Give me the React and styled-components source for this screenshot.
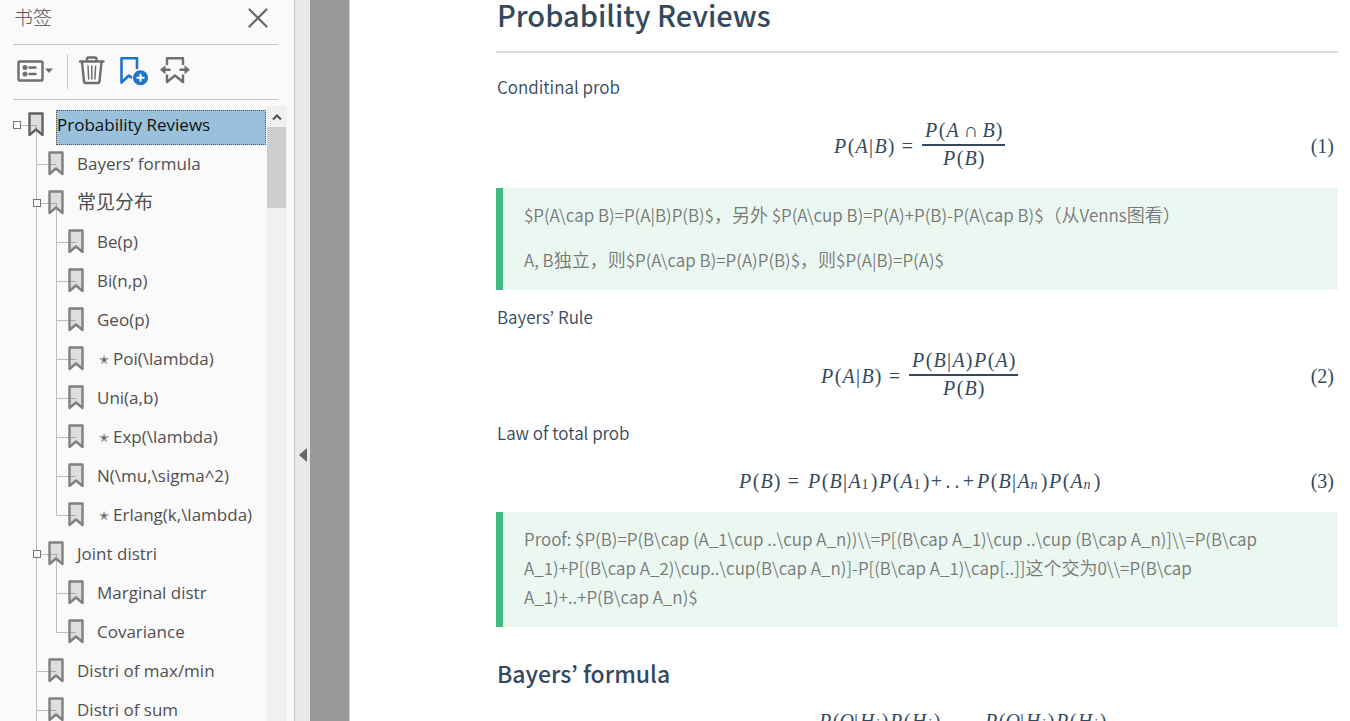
import React from "react";
import styled, { createGlobalStyle } from "styled-components";

const INK = "#34495e";
const LINE = "#bdbdbd";

const GlobalStyle = createGlobalStyle`
  * { box-sizing: border-box; }
  body { margin: 0; background: #fff; }
  button { padding: 0; border: 0; background: none; cursor: pointer; }
`;

const Shell = styled.div`
  display: flex;
  height: 100vh;
  overflow: hidden;
`;

/* ---------- Bookmark panel ---------- */

const Panel = styled.aside`
  display: flex;
  flex-direction: column;
  flex: 0 0 295px;
  background: #fafafa;
  border-right: 1px solid #c8c8c8;
  font-family: "Open Sans", "Noto Sans CJK SC", sans-serif;
  color: #505050;
`;

const PanelHeader = styled.header`
  display: flex;
  align-items: center;
  justify-content: space-between;
  height: 45px;
  margin: 0 16px 0 13px;
  padding: 0 10px 8px 1px;
  border-bottom: 1px solid #c8c8c8;
`;

const PanelTitle = styled.h2`
  margin: 0;
  font-size: 19px;
  font-weight: 300;
  line-height: 28px;
`;

const IconButton = styled.button`
  display: flex;
  flex: none;
`;

const Toolbar = styled.div`
  display: flex;
  align-items: center;
  height: 55px;
  margin: 0 16px 0 13px;
  padding: 0 0 2px 4px;
  border-bottom: 1px solid #c8c8c8;
`;

const ToolDivider = styled.span`
  width: 1px;
  height: 35px;
  margin: 0 11px 0 13px;
  background: #c8c8c8;
`;

const ToolGroup = styled.div`
  display: flex;
  gap: 11px;
`;

const TreeArea = styled.div`
  display: flex;
  flex: 1;
  min-height: 0;
  padding: 6px 7px 0 0;
`;

const Tree = styled.nav`
  flex: 1;
  min-width: 0;
  padding-right: 1px;
  overflow: hidden;
`;

const TreeList = styled.ul`
  margin: 0;
  padding: 0;
  list-style: none;

  & & { margin-left: 20px; }

  & & > li {
    background:
      linear-gradient(${LINE}, ${LINE}) 16px 0 / 1px 100% no-repeat,
      linear-gradient(${LINE}, ${LINE}) 16px 19px / 20px 1px no-repeat;
  }

  & & > li:last-child {
    background-size: 1px 20px, 20px 1px;
  }
`;

const TreeRow = styled.div`
  display: flex;
  align-items: flex-start;
  height: 39px;
  padding-left: 13px;
  background: ${(p) =>
    p.$open
      ? `linear-gradient(${LINE}, ${LINE}) 36px 19px / 1px 20px no-repeat,
         linear-gradient(${LINE}, ${LINE}) 20px 19px / 16px 1px no-repeat`
      : "none"};
`;

const ExpanderSlot = styled.span`
  flex: 0 0 15px;
  padding-top: 15px;
`;

const Expander = styled.button`
  display: block;
  width: 8px;
  height: 8px;
  && {
    border: 1px solid #777;
    background: #fafafa;
  }
`;

const RowIcon = styled.span`
  flex: 0 0 28px;
  height: 25px;
  margin-top: 6px;
  svg { display: block; }
`;

const RowLabel = styled.a`
  flex: 1;
  height: 35px;
  margin-top: 4px;
  border: 1px dotted ${(p) => (p.$selected ? "#7a4a2a" : "transparent")};
  background: ${(p) => (p.$selected ? "#9ac1db" : "transparent")};
  color: ${(p) => (p.$selected ? "#111" : "#505050")};
  font-size: 17px;
  line-height: 28px;
  text-decoration: none;
  white-space: nowrap;
`;

const Han = styled.span`
  font-size: ${(p) => p.$size}px;
  line-height: 1;
`;

const Star = styled.span`
  display: inline-block;
  width: 16px;
  padding-left: 2px;
  font-family: "DejaVu Sans", sans-serif;
  font-size: 12px;
  line-height: 1;
  vertical-align: 1px;
`;

const Scrollbar = styled.div`
  display: flex;
  flex-direction: column;
  flex: 0 0 20px;
  padding-right: 1px;
  background: #f0f0f0;
`;

const ScrollUp = styled.button`
  display: flex;
  align-items: center;
  justify-content: center;
  height: 21px;
`;

const ScrollThumb = styled.span`
  height: 81px;
  background: #cdcdcd;
`;

/* ---------- Strip between panel and page ---------- */

const Splitter = styled.div`
  display: grid;
  flex: 0 0 15px;
  grid-template-rows: 19fr auto 11fr;
  justify-items: center;
  background: #e9e9e9;
`;

const CollapseButton = styled.button`
  grid-row: 2;
  display: flex;
`;

const Gutter = styled.div`
  flex: 0 0 40px;
  background: #999;
  border-right: 1px solid #cfcfcf;
`;

/* ---------- Document ---------- */

const Page = styled.main`
  flex: 1;
  min-width: 0;
  padding: 0 12px 0 146px;
  background: #fff;
  color: ${INK};
  font-family: "Noto Sans CJK KR", sans-serif;
  font-size: 17px;
  font-weight: 350;
  line-height: 29px;
`;

const Title = styled.h1`
  margin: 0 0 19px;
  padding: 0 0 23px 1px;
  border-bottom: 2px solid #ddd;
  font-size: 29px;
  font-weight: 500;
  line-height: 28px;
`;

const Subtitle = styled.h2`
  margin: 26px 0 16px;
  padding-left: 1px;
  font-size: 23px;
  font-weight: 500;
  line-height: 40px;
`;

const Paragraph = styled.p`
  margin: 0 0 17px;
  padding-left: 1px;
`;

const Quote = styled.blockquote`
  display: flex;
  flex-direction: column;
  gap: 16px;
  margin: 0 0 12px;
  padding: 12px 60px 16px 21px;
  border-left: 7px solid #42b983;
  background: #ebf8f2;
  color: #777;
  font-family: "Noto Sans CJK SC", sans-serif;
`;

const QuoteText = styled.p`
  margin: 0;
`;

const Equation = styled.div`
  display: grid;
  grid-template-columns: 1fr auto 1fr;
  align-items: center;
  min-height: 33px;
  margin-bottom: 15px;
  font-family: "Liberation Serif", serif;
  font-size: 20px;
  font-weight: 400;
  line-height: 24px;
`;

const EquationBody = styled.div`
  grid-column: 2;
  display: flex;
  align-items: center;
  padding-left: 4px;
`;

const EquationNumber = styled.span`
  justify-self: end;
  padding-right: 4px;
`;

const MathRow = styled.span`
  display: flex;
  align-items: center;
  justify-content: center;
`;

const widths = { letter: 14, cap: 15, wide: 17, paren: 7, bar: 5, rel: 14, dot: 9 };
const spacing = { "=": 6, "∩": 4, "Σ": 4 };

const Symbol = styled.span`
  width: ${(p) => widths[p.$kind]}px;
  margin: 0 ${(p) => p.$space}px;
  text-align: center;
  font-style: ${(p) => (["letter", "cap", "wide"].includes(p.$kind) ? "italic" : "normal")};
`;

const Subscript = styled.span`
  width: ${(p) => p.$width}px;
  padding-top: 8px;
  font-size: 14px;
  line-height: 16px;
  font-style: ${(p) => (p.$digit ? "normal" : "italic")};
`;

const Fraction = styled.span`
  display: flex;
  flex-direction: column;
  padding: 0 1px;
`;

const Numerator = styled.span`
  padding: 0 2px 2px;
  border-bottom: 2px solid ${INK};
`;

const Denominator = styled.span`
  padding: 0 2px 3px;
`;

function kindOf(ch) {
  if ("()".includes(ch)) return "paren";
  if (ch === "|") return "bar";
  if (ch === ".") return "dot";
  if (ch === "H") return "wide";
  if (ch === "P") return "cap";
  if ("=∩+Σ".includes(ch)) return "rel";
  return "letter";
}

const subWidth = (ch) => (ch === "n" ? 10 : ch === "1" ? 9 : 6);

/* Sets a short formula; "_x" marks x as a subscript. */
function Formula({ children }) {
  const tokens = children.match(/_.|\S/g);
  return (
    <MathRow>
      {tokens.map((t, i) =>
        t[0] === "_" ? (
          <Subscript key={i} $width={subWidth(t[1])} $digit={/\d/.test(t[1])}>{t[1]}</Subscript>
        ) : (
          <Symbol key={i} $kind={kindOf(t)} $space={spacing[t] || 0}>{t}</Symbol>
        )
      )}
    </MathRow>
  );
}

function Frac({ top, bottom }) {
  return (
    <Fraction>
      <Numerator><Formula>{top}</Formula></Numerator>
      <Denominator><Formula>{bottom}</Formula></Denominator>
    </Fraction>
  );
}

/* Chinese runs are set a little larger than the Latin text around them. */
function Mixed({ children, size = 18 }) {
  return children
    .split(/([\u3000-\u9fff\uff00-\uffef]+)/)
    .map((s, i) => (i % 2 ? <Han key={i} $size={size}>{s}</Han> : s));
}

/* ---------- Icons ---------- */

const CloseIcon = () => (
  <svg width="20" height="20" viewBox="0 0 20 20" fill="none" stroke="#666" strokeWidth="2.2" strokeLinecap="round">
    <path d="M1.5 1.5l17 17M18.5 1.5l-17 17" />
  </svg>
);

const OptionsIcon = () => (
  <svg width="37" height="30" viewBox="0 0 37 30" fill="none" stroke="#6e6e6e" strokeWidth="2.4">
    <rect x="1.5" y="5.5" width="24" height="19" rx="1" />
    <circle cx="8" cy="11.5" r="2.5" fill="#6e6e6e" stroke="none" />
    <circle cx="8" cy="18" r="2.5" fill="#6e6e6e" stroke="none" />
    <path d="M12.5 11.5h6M12.5 18h6" strokeLinecap="round" />
    <path d="M28 12.5h8l-4 4.5z" fill="#6e6e6e" stroke="none" />
  </svg>
);

const TrashIcon = () => (
  <svg width="29" height="30" viewBox="0 0 29 30" fill="none" stroke="#6e6e6e" strokeWidth="2.4">
    <path d="M1 5.5h23.5" strokeLinecap="round" />
    <path d="M8 5V3q0-1.5 1.5-1.5h6.5q1.5 0 1.5 1.5v2" />
    <path d="M3 6l2 19.5q.2 1.5 1.5 1.5h12.5q1.3 0 1.5-1.5l2-19.5" />
    <path d="M9 10l.7 13M12.8 10v13M16.6 10l-.7 13" strokeWidth="1.5" strokeLinecap="round" />
  </svg>
);

const AddBookmarkIcon = () => (
  <svg width="30" height="30" viewBox="0 0 30 30" fill="none">
    <path d="M13 22l-3-2.5-7.5 7V2.2h15.5V13" stroke="#1f73c9" strokeWidth="2.6" strokeLinejoin="round" />
    <circle cx="21.5" cy="21.7" r="7.5" fill="#1f73c9" />
    <path d="M21.5 17.7v8M17.5 21.7h8" stroke="#fff" strokeWidth="2" />
  </svg>
);

const MoveBookmarkIcon = () => (
  <svg width="30" height="30" viewBox="0 0 30 30" fill="none" stroke="#6e6e6e" strokeWidth="2.4">
    <path d="M7 9V2.2h16v6.8M7 18.5V26l8-6.5 8 6.5v-7.5" strokeLinejoin="round" />
    <path d="M10.5 13.7H4M19.5 13.7H26" />
    <path d="M0 13.7l5.5-4.500v9zM30 13.7l-5.5-4.500v9z" fill="#6e6e6e" stroke="none" />
  </svg>
);

const BookmarkIcon = ({ dark }) => (
  <svg width="16" height="25" viewBox="0 0 16 25">
    <path
      d="M1.5 1.5h13v21.5L8 17.5l-6.5 5.5z"
      fill="rgba(0,0,0,0.11)"
      stroke={dark ? "#626262" : "#808080"}
      strokeWidth="2.4"
      strokeLinejoin="round"
    />
  </svg>
);

/* ---------- Data ---------- */

const bookmarks = [
  {
    label: "Probability Reviews",
    selected: true,
    children: [
      { label: "Bayers’ formula" },
      {
        label: "常见分布",
        children: [
          { label: "Be(p)" },
          { label: "Bi(n,p)" },
          { label: "Geo(p)" },
          { label: "Poi(\\lambda)", star: true },
          { label: "Uni(a,b)" },
          { label: "Exp(\\lambda)", star: true },
          { label: "N(\\mu,\\sigma^2)" },
          { label: "Erlang(k,\\lambda)", star: true },
        ],
      },
      {
        label: "Joint distri",
        children: [{ label: "Marginal distr" }, { label: "Covariance" }],
      },
      { label: "Distri of max/min" },
      { label: "Distri of sum" },
      { label: "Expectation" },
    ],
  },
];

function BookmarkItem({ item }) {
  const open = Boolean(item.children);
  return (
    <li>
      <TreeRow $open={open}>
        <ExpanderSlot>
          {open && <Expander type="button" aria-expanded="true" aria-label={item.label} />}
        </ExpanderSlot>
        <RowIcon><BookmarkIcon dark={item.selected} /></RowIcon>
        <RowLabel href="#page" $selected={item.selected}>
          {item.star && <Star>✭</Star>}
          <Mixed size={19}>{item.label}</Mixed>
        </RowLabel>
      </TreeRow>
      {open && (
        <TreeList>
          {item.children.map((c) => <BookmarkItem key={c.label} item={c} />)}
        </TreeList>
      )}
    </li>
  );
}

export default function App() {
  return (
    <Shell>
      <GlobalStyle />
      <Panel>
        <PanelHeader>
          <PanelTitle>书签</PanelTitle>
          <IconButton type="button" aria-label="关闭"><CloseIcon /></IconButton>
        </PanelHeader>
        <Toolbar>
          <IconButton type="button" aria-label="选项"><OptionsIcon /></IconButton>
          <ToolDivider />
          <ToolGroup>
            <IconButton type="button" aria-label="删除"><TrashIcon /></IconButton>
            <IconButton type="button" aria-label="新建书签"><AddBookmarkIcon /></IconButton>
            <IconButton type="button" aria-label="展开当前书签"><MoveBookmarkIcon /></IconButton>
          </ToolGroup>
        </Toolbar>
        <TreeArea>
          <Tree aria-label="书签">
            <TreeList>
              {bookmarks.map((b) => <BookmarkItem key={b.label} item={b} />)}
            </TreeList>
          </Tree>
          <Scrollbar>
            <ScrollUp type="button" aria-label="向上">
              <svg width="10" height="8" viewBox="0 0 10 8" fill="none" stroke="#505050" strokeWidth="2">
                <path d="M1 6.5l4-4 4 4" />
              </svg>
            </ScrollUp>
            <ScrollThumb />
          </Scrollbar>
        </TreeArea>
      </Panel>
      <Splitter>
        <CollapseButton type="button" aria-label="折叠">
          <svg width="8" height="14" viewBox="0 0 8 14"><path d="M8 0v14L0 7z" fill="#666" /></svg>
        </CollapseButton>
      </Splitter>
      <Gutter />
      <Page id="page">
        <Title>Probability Reviews</Title>
        <Paragraph>Conditinal prob</Paragraph>
        <Equation>
          <EquationBody>
            <Formula>P(A|B)=</Formula>
            <Frac top="P(A∩B)" bottom="P(B)" />
          </EquationBody>
          <EquationNumber>(1)</EquationNumber>
        </Equation>
        <Quote>
          <QuoteText>
            <Mixed>{"$P(A\\cap B)=P(A|B)P(B)$，另外 $P(A\\cup B)=P(A)+P(B)-P(A\\cap B)$（从Venns图看）"}</Mixed>
          </QuoteText>
          <QuoteText>
            <Mixed>{"A, B独立，则$P(A\\cap B)=P(A)P(B)$，则$P(A|B)=P(A)$"}</Mixed>
          </QuoteText>
        </Quote>
        <Paragraph>Bayers’ Rule</Paragraph>
        <Equation>
          <EquationBody>
            <Formula>P(A|B)=</Formula>
            <Frac top="P(B|A)P(A)" bottom="P(B)" />
          </EquationBody>
          <EquationNumber>(2)</EquationNumber>
        </Equation>
        <Paragraph>Law of total prob</Paragraph>
        <Equation>
          <EquationBody>
            <Formula>P(B)=P(B|A_1)P(A_1)+..+P(B|A_n)P(A_n)</Formula>
          </EquationBody>
          <EquationNumber>(3)</EquationNumber>
        </Equation>
        <Quote>
          <QuoteText>
            <Mixed>{"Proof: $P(B)=P(B\\cap (A_1\\cup ..\\cup A_n))\\\\=P[(B\\cap A_1)\\cup ..\\cup (B\\cap A_n)]\\\\=P(B\\cap A_1)+P[(B\\cap A_2)\\cup..\\cup(B\\cap A_n)]-P[(B\\cap A_1)\\cap[..]]这个交为0\\\\=P(B\\cap A_1)+..+P(B\\cap A_n)$"}</Mixed>
          </QuoteText>
        </Quote>
        <Subtitle>Bayers’ formula</Subtitle>
        <Equation>
          <EquationBody>
            <Formula>P(H_i|O)=</Formula>
            <Frac top="P(O|H_i)P(H_i)" bottom="P(O)" />
            <Formula>=</Formula>
            <Frac top="P(O|H_i)P(H_i)" bottom="ΣP(O|H_j)P(H_j)" />
          </EquationBody>
          <EquationNumber>(4)</EquationNumber>
        </Equation>
      </Page>
    </Shell>
  );
}
